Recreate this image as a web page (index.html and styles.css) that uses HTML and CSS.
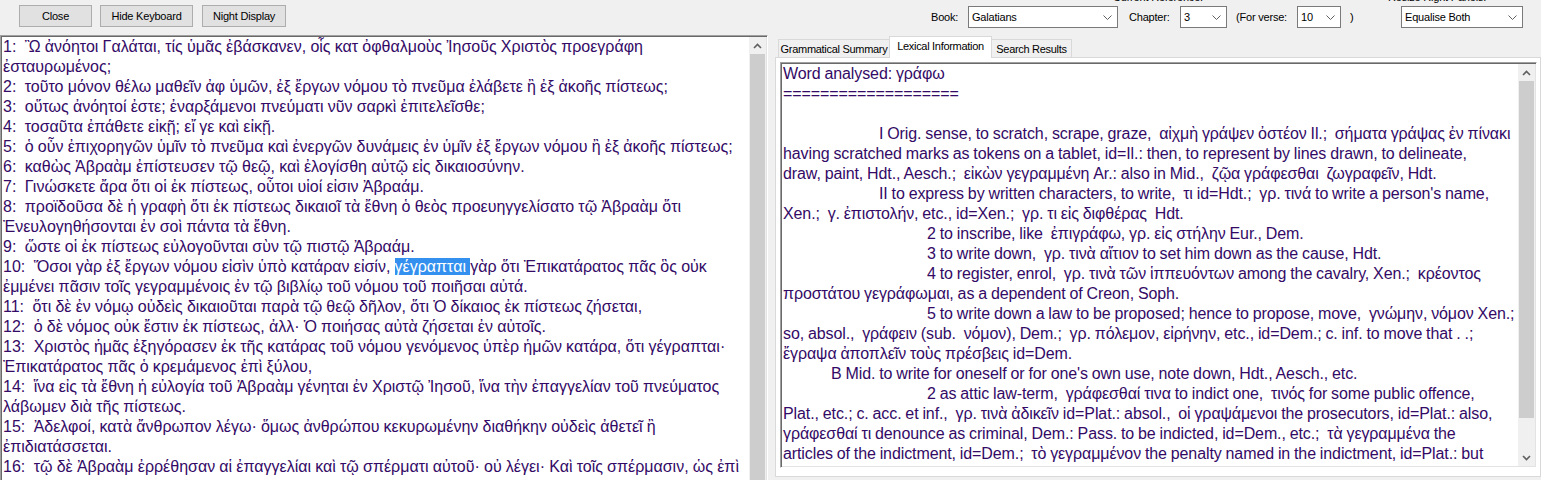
FILE: index.html
```html
<!DOCTYPE html>
<html lang="en">
<head>
<meta charset="utf-8">
<title>Greek New Testament Reader</title>
<link rel="stylesheet" href="styles.css">
</head>
<body>
<header class="toolbar">
  <button class="btn btn-close">Close</button>
  <button class="btn btn-kbd">Hide Keyboard</button>
  <button class="btn btn-night">Night Display</button>

  <div class="group group-ref">
    <div class="caption cap-ref">Current Reference:</div>
    <div class="row">
      <span class="lbl lbl-book">Book:</span>
      <div class="combo combo-book"><span>Galatians</span><svg class="chev" width="9" height="5" viewBox="0 0 9 5"><polyline points="0.5,0.5 4.5,4.5 8.5,0.5" fill="none" stroke="#606060" stroke-width="1"/></svg></div>
      <span class="lbl lbl-chap">Chapter:</span>
      <div class="combo combo-chap"><span>3</span><svg class="chev" width="9" height="5" viewBox="0 0 9 5"><polyline points="0.5,0.5 4.5,4.5 8.5,0.5" fill="none" stroke="#606060" stroke-width="1"/></svg></div>
      <span class="lbl lbl-verse">(For verse:</span>
      <div class="combo combo-verse"><span>10</span><svg class="chev" width="9" height="5" viewBox="0 0 9 5"><polyline points="0.5,0.5 4.5,4.5 8.5,0.5" fill="none" stroke="#606060" stroke-width="1"/></svg></div>
      <span class="lbl lbl-close">)</span>
    </div>
  </div>

  <div class="group group-panels">
    <div class="caption cap-panels">Resize Right Panels:</div>
    <div class="row">
      <div class="combo combo-eq"><span>Equalise Both</span><svg class="chev" width="9" height="5" viewBox="0 0 9 5"><polyline points="0.5,0.5 4.5,4.5 8.5,0.5" fill="none" stroke="#606060" stroke-width="1"/></svg></div>
    </div>
  </div>
</header>

<main class="panes">
  <section class="pane-left">
    <div class="textbox textbox-left">
      <div class="text">
        <div class="l">1:  Ὢ ἀνόητοι Γαλάται, τίς ὑμᾶς ἐβάσκανεν, οἷς κατ ὀφθαλμοὺς Ἰησοῦς Χριστὸς προεγράφη</div>
        <div class="l">ἐσταυρωμένος;</div>
        <div class="l">2:  τοῦτο μόνον θέλω μαθεῖν ἀφ ὑμῶν, ἐξ ἔργων νόμου τὸ πνεῦμα ἐλάβετε ἢ ἐξ ἀκοῆς πίστεως;</div>
        <div class="l">3:  οὕτως ἀνόητοί ἐστε; ἐναρξάμενοι πνεύματι νῦν σαρκὶ ἐπιτελεῖσθε;</div>
        <div class="l">4:  τοσαῦτα ἐπάθετε εἰκῇ; εἴ γε καὶ εἰκῇ.</div>
        <div class="l">5:  ὁ οὖν ἐπιχορηγῶν ὑμῖν τὸ πνεῦμα καὶ ἐνεργῶν δυνάμεις ἐν ὑμῖν ἐξ ἔργων νόμου ἢ ἐξ ἀκοῆς πίστεως;</div>
        <div class="l">6:  καθὼς Ἀβραὰμ ἐπίστευσεν τῷ θεῷ, καὶ ἐλογίσθη αὐτῷ εἰς δικαιοσύνην.</div>
        <div class="l">7:  Γινώσκετε ἄρα ὅτι οἱ ἐκ πίστεως, οὗτοι υἱοί εἰσιν Ἀβραάμ.</div>
        <div class="l">8:  προϊδοῦσα δὲ ἡ γραφὴ ὅτι ἐκ πίστεως δικαιοῖ τὰ ἔθνη ὁ θεὸς προευηγγελίσατο τῷ Ἀβραὰμ ὅτι</div>
        <div class="l">Ἐνευλογηθήσονται ἐν σοὶ πάντα τὰ ἔθνη.</div>
        <div class="l">9:  ὥστε οἱ ἐκ πίστεως εὐλογοῦνται σὺν τῷ πιστῷ Ἀβραάμ.</div>
        <div class="l">10:  Ὅσοι γὰρ ἐξ ἔργων νόμου εἰσὶν ὑπὸ κατάραν εἰσίν, <span class="sel">γέγραπται </span>γὰρ ὅτι Ἐπικατάρατος πᾶς ὃς οὐκ</div>
        <div class="l">ἐμμένει πᾶσιν τοῖς γεγραμμένοις ἐν τῷ βιβλίῳ τοῦ νόμου τοῦ ποιῆσαι αὐτά.</div>
        <div class="l">11:  ὅτι δὲ ἐν νόμῳ οὐδεὶς δικαιοῦται παρὰ τῷ θεῷ δῆλον, ὅτι Ὁ δίκαιος ἐκ πίστεως ζήσεται,</div>
        <div class="l">12:  ὁ δὲ νόμος οὐκ ἔστιν ἐκ πίστεως, ἀλλ· Ὁ ποιήσας αὐτὰ ζήσεται ἐν αὐτοῖς.</div>
        <div class="l">13:  Χριστὸς ἡμᾶς ἐξηγόρασεν ἐκ τῆς κατάρας τοῦ νόμου γενόμενος ὑπὲρ ἡμῶν κατάρα, ὅτι γέγραπται·</div>
        <div class="l">Ἐπικατάρατος πᾶς ὁ κρεμάμενος ἐπὶ ξύλου,</div>
        <div class="l">14:  ἵνα εἰς τὰ ἔθνη ἡ εὐλογία τοῦ Ἀβραὰμ γένηται ἐν Χριστῷ Ἰησοῦ, ἵνα τὴν ἐπαγγελίαν τοῦ πνεύματος</div>
        <div class="l">λάβωμεν διὰ τῆς πίστεως.</div>
        <div class="l">15:  Ἀδελφοί, κατὰ ἄνθρωπον λέγω· ὅμως ἀνθρώπου κεκυρωμένην διαθήκην οὐδεὶς ἀθετεῖ ἢ</div>
        <div class="l">ἐπιδιατάσσεται.</div>
        <div class="l">16:  τῷ δὲ Ἀβραὰμ ἐρρέθησαν αἱ ἐπαγγελίαι καὶ τῷ σπέρματι αὐτοῦ· οὐ λέγει· Καὶ τοῖς σπέρμασιν, ὡς ἐπὶ</div>
      </div>
      <div class="vscroll">
        <div class="arrow"><svg width="9" height="6" viewBox="0 0 9 6"><polyline points="1,5 4.5,1.5 8,5" fill="none" stroke="#606060" stroke-width="1.6"/></svg></div>
        <div class="thumb thumb-left"></div>
      </div>
    </div>
  </section>

  <section class="pane-right">
    <nav class="tabs">
      <div class="tab tab-gram">Grammatical Summary</div>
      <div class="tab tab-active tab-lex">Lexical Information</div>
      <div class="tab tab-search">Search Results</div>
    </nav>
    <div class="tabpage">
      <div class="textbox textbox-right">
        <div class="text">
          <div class="l">Word analysed: γράφω</div>
          <div class="l">===================</div>
          <div class="l"> </div>
          <div class="l i2">I Orig. sense, to scratch, scrape, graze,  αἰχμὴ γράψεν ὀστέον Il.;  σήματα γράψας ἐν πίνακι</div>
          <div class="l">having scratched marks as tokens on a tablet, id=Il.: then, to represent by lines drawn, to delineate,</div>
          <div class="l">draw, paint, Hdt., Aesch.;  εἰκὼν γεγραμμένη Ar.: also in Mid.,  ζῷα γράφεσθαι  ζωγραφεῖν, Hdt.</div>
          <div class="l i2">II to express by written characters, to write,  τι id=Hdt.;  γρ. τινά to write a person's name,</div>
          <div class="l">Xen.;  γ. ἐπιστολήν, etc., id=Xen.;  γρ. τι εἰς διφθέρας  Hdt.</div>
          <div class="l i3">2 to inscribe, like  ἐπιγράφω, γρ. εἰς στήλην Eur., Dem.</div>
          <div class="l i3">3 to write down,  γρ. τινὰ αἴτιον to set him down as the cause, Hdt.</div>
          <div class="l i3">4 to register, enrol,  γρ. τινὰ τῶν ἱππευόντων among the cavalry, Xen.;  κρέοντος</div>
          <div class="l">προστάτου γεγράφωμαι, as a dependent of Creon, Soph.</div>
          <div class="l i3">5 to write down a law to be proposed; hence to propose, move,  γνώμην, νόμον Xen.;</div>
          <div class="l">so, absol.,  γράφειν (sub.  νόμον), Dem.;  γρ. πόλεμον, εἰρήνην, etc., id=Dem.; c. inf. to move that . .;</div>
          <div class="l">ἔγραψα ἀποπλεῖν τοὺς πρέσβεις id=Dem.</div>
          <div class="l i1">B Mid. to write for oneself or for one's own use, note down, Hdt., Aesch., etc.</div>
          <div class="l i3">2 as attic law-term,  γράφεσθαί τινα to indict one,  τινός for some public offence,</div>
          <div class="l">Plat., etc.; c. acc. et inf.,  γρ. τινὰ ἀδικεῖν id=Plat.: absol.,  οἱ γραψάμενοι the prosecutors, id=Plat.: also,</div>
          <div class="l">γράφεσθαί τι denounce as criminal, Dem.: Pass. to be indicted, id=Dem., etc.;  τὰ γεγραμμένα the</div>
          <div class="l">articles of the indictment, id=Dem.;  τὸ γεγραμμένον the penalty named in the indictment, id=Plat.: but</div>
        </div>
        <div class="vscroll">
          <div class="arrow"><svg width="9" height="6" viewBox="0 0 9 6"><polyline points="1,5 4.5,1.5 8,5" fill="none" stroke="#606060" stroke-width="1.6"/></svg></div>
          <div class="thumb thumb-right"></div>
          <div class="track"></div>
          <div class="arrow"><svg width="9" height="6" viewBox="0 0 9 6"><polyline points="1,1 4.5,4.5 8,1" fill="none" stroke="#606060" stroke-width="1.6"/></svg></div>
        </div>
      </div>
    </div>
  </section>
</main>
</body>
</html>
```

FILE: styles.css
```css
html, body {
  margin: 0;
  padding: 0;
}
body {
  width: 1541px;
  height: 480px;
  overflow: hidden;
  background: #f0f0f0;
  font-family: "Liberation Sans", Arial, Roboto, "DejaVu Sans", sans-serif;
  color: #000;
}

/* ---------- toolbar ---------- */
.toolbar {
  display: flex;
  align-items: flex-start;
  height: 35px;
  font-size: 11px;
  letter-spacing: -0.2px;
}
.btn {
  margin-top: 5px;
  height: 22px;
  box-sizing: border-box;
  border: 1px solid #adadad;
  background: #e1e1e1;
  font-family: "Liberation Sans", Arial, sans-serif;
  font-size: 11px;
  letter-spacing: -0.2px;
  color: #000;
  padding: 0;
  display: flex;
  align-items: center;
  justify-content: center;
}
.btn-close { margin-left: 19px; width: 73px; }
.btn-kbd { margin-left: 8px; width: 93px; }
.btn-night { margin-left: 9px; width: 84px; }

.group {
  display: flex;
  flex-direction: column;
}
.group-ref { margin-left: 645px; }
.group-panels { margin-left: 46px; }
.caption {
  margin-top: -9px;
  height: 13px;
  line-height: 13px;
  margin-bottom: 2px;
  white-space: nowrap;
}
.cap-ref { padding-left: 182px; }
.cap-panels { margin-left: -13px; }

.row {
  display: flex;
  align-items: center;
  height: 22px;
}
.lbl { white-space: nowrap; box-sizing: border-box; }
.lbl-book { width: 37px; }
.lbl-chap { margin-left: 11px; width: 51px; }
.lbl-verse { margin-left: 9px; width: 61px; }
.lbl-close { margin-left: 9px; width: 5px; }

.combo {
  height: 22px;
  box-sizing: border-box;
  border: 1px solid #7a7a7a;
  background: #fff;
  display: flex;
  align-items: center;
  justify-content: space-between;
  padding: 0 5px 0 3px;
  white-space: nowrap;
}
.combo-book { width: 150px; }
.combo-chap { width: 47px; }
.combo-verse { width: 44px; }
.combo-eq { width: 122px; }
.chev { display: block; flex: none; }

/* ---------- panes ---------- */
.panes {
  display: flex;
  align-items: flex-start;
  height: 445px;
}
.pane-left {
  width: 768px;
  flex: none;
}
.textbox {
  display: flex;
  box-sizing: border-box;
  background: #fff;
  border-top: 1px solid #a0a0a0;
  border-left: 1px solid #a0a0a0;
  border-right: 1px solid #fff;
  border-bottom: 1px solid #fff;
  box-shadow: inset 1px 1px 0 #696969, inset -1px -1px 0 #e3e3e3;
  padding: 1px;
  overflow: hidden;
}
.textbox-left {
  width: 768px;
  height: 460px;
}
.text {
  flex: 1;
  min-width: 0;
  overflow: hidden;
  padding-left: 1px;
  font-size: 16px;
  line-height: 20px;
  color: #330a66;
}
.textbox-left .text {
  word-spacing: -0.25px;
}
.textbox-right .text {
  word-spacing: -0.45px;
  letter-spacing: -0.1px;
}
.l {
  white-space: pre;
  height: 20px;
}
.sel {
  background: #3390ee;
  color: #fff;
}
.i1 { padding-left: 48px; }
.i2 { padding-left: 96px; }
.i3 { padding-left: 144px; }

.vscroll {
  width: 17px;
  flex: none;
  background: #f0f0f0;
  display: flex;
  flex-direction: column;
}
.arrow {
  height: 17px;
  flex: none;
  display: flex;
  align-items: center;
  justify-content: center;
}
.arrow svg { display: block; }
.thumb {
  background: #cdcdcd;
  margin: 0 1px;
}
.thumb-left { flex: 1; }
.thumb-right { height: 337px; flex: none; }
.track { flex: 1; }

/* ---------- right pane ---------- */
.pane-right {
  margin-left: 7px;
  width: 766px;
  flex: none;
  display: flex;
  flex-direction: column;
}
.tabs {
  display: flex;
  align-items: flex-end;
  height: 21px;
  margin-top: 1px;
  margin-left: 3px;
  font-size: 11px;
  letter-spacing: -0.3px;
}
.tab {
  box-sizing: border-box;
  height: 18px;
  border: 1px solid #d9d9d9;
  border-bottom: none;
  background: #f0f0f0;
  display: flex;
  align-items: center;
  justify-content: center;
  white-space: nowrap;
  padding-top: 1px;
}
.tab-gram { width: 111px; border-right: none; }
.tab-lex { width: 103px; }
.tab-search { width: 80px; border-left: none; }
.tab-active {
  height: 22px;
  background: #fff;
  position: relative;
  margin-bottom: -1px;
  z-index: 1;
  padding-top: 0;
  padding-bottom: 3px;
}
.tabpage {
  box-sizing: border-box;
  border: 1px solid #d9d9d9;
  background: #fff;
  padding: 4px 3px 4px 4px;
  height: 420px;
}
.textbox-right {
  width: 757px;
  height: 406px;
}
```
